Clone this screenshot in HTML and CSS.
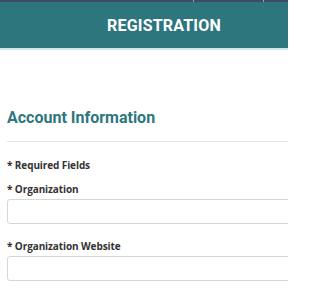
FILE: index.html
```html
<!DOCTYPE html>
<html>
<head>
<meta charset="utf-8">
<link rel="stylesheet" href="styles.css">
</head>
<body>
<div class="topbar"><span class="sep s1"></span><span class="sep s2"></span></div>
<header class="header">
  <h1 class="title">REGISTRATION</h1>
</header>
<div class="header-line"></div>
<main class="content">
  <h2 class="section-title">Account Information</h2>
  <div class="divider"></div>
  <p class="note">* Required Fields</p>
  <label class="label">* Organization</label>
  <div class="input"></div>
  <label class="label label-2">* Organization Website</label>
  <div class="input"></div>
</main>
</body>
</html>
```
FILE: styles.css
```css
* { box-sizing: border-box; }
html, body { margin: 0; padding: 0; }
body {
  width: 288px;
  height: 288px;
  overflow: hidden;
  background: #ffffff;
  font-family: "Open Sans", sans-serif;
}
.topbar {
  height: 2px;
  background: #3f4a6b;
  display: flex;
}
.sep { width: 1px; height: 2px; background: #8fa0b0; }
.s1 { margin-left: 193px; }
.s2 { margin-left: 69px; }
.header {
  height: 46px;
  background: #2e767e;
  display: flex;
  align-items: center;
  justify-content: center;
  padding-left: 40px;
}
.title {
  margin: 0;
  color: #ffffff;
  font-family: Roboto, sans-serif;
  font-weight: 700;
  font-size: 16px;
  letter-spacing: 0.2px;
}
.header-line { height: 2px; background: #cfe7ea; }
.content { padding-left: 7px; }
.section-title {
  margin: 58px 0 0;
  font-family: Roboto, sans-serif;
  font-weight: 700;
  font-size: 16px;
  line-height: 20px;
  color: #2e767e;
}
.divider {
  margin-top: 13px;
  height: 1px;
  background: #e4e4e4;
}
.note, .label {
  display: block;
  margin: 0;
  font-size: 10px;
  font-weight: 700;
  color: #333;
  line-height: 14px;
  letter-spacing: -0.1px;
}
.note { margin-top: 16px; }
.label { margin-top: 10px; }
.label-2 { margin-top: 15px; }
.input {
  margin-top: 3px;
  width: 300px;
  height: 25px;
  border: 1px solid #d6d6d6;
  border-radius: 3px;
  background: #fff;
}
```
